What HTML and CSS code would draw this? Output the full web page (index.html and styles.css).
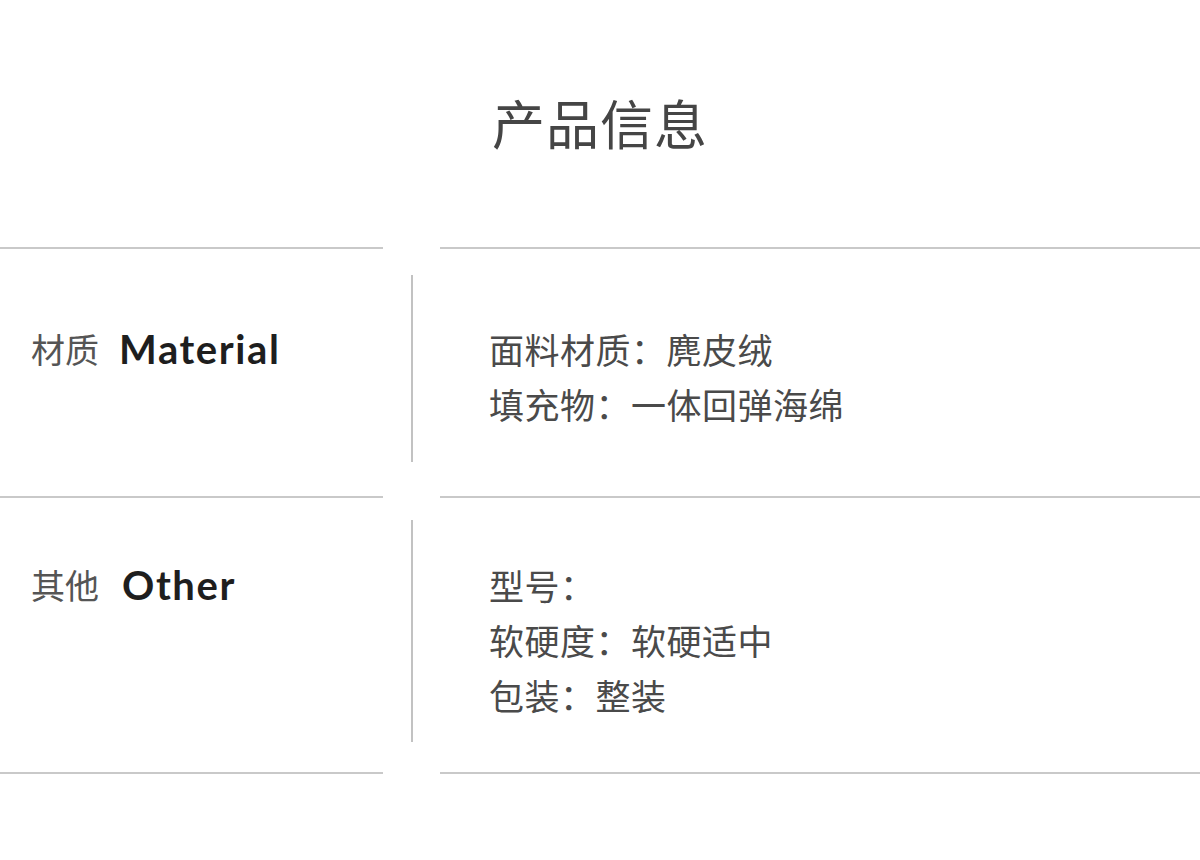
FILE: index.html
```html
<!DOCTYPE html>
<html lang="zh">
<head>
<meta charset="utf-8">
<title>产品信息</title>
<link rel="stylesheet" href="styles.css">
</head>
<body>
<div class="page">
  <h1 class="title">产品信息</h1>
  <div class="spec">
    <div class="rule"><span class="seg seg-left"></span><span class="seg seg-right"></span></div>
    <div class="row row-material">
      <div class="label"><span class="label-zh">材质</span><span class="label-en">Material</span></div>
      <div class="divider"></div>
      <div class="content">
        <p class="line">面料材质：麂皮绒</p>
        <p class="line">填充物：一体回弹海绵</p>
      </div>
    </div>
    <div class="rule"><span class="seg seg-left"></span><span class="seg seg-right"></span></div>
    <div class="row row-other">
      <div class="label"><span class="label-zh">其他</span><span class="label-en label-en-other">Other</span></div>
      <div class="divider"></div>
      <div class="content">
        <p class="line">型号：</p>
        <p class="line">软硬度：软硬适中</p>
        <p class="line">包装：整装</p>
      </div>
    </div>
    <div class="rule"><span class="seg seg-left"></span><span class="seg seg-right"></span></div>
  </div>
</div>
</body>
</html>
```

FILE: styles.css
```css
html, body {
  margin: 0;
  padding: 0;
  background: #ffffff;
}

body {
  font-family: "Noto Sans CJK SC", "Noto Sans", sans-serif;
  color: #4a4a4a;
}

.page {
  width: 1200px;
  height: 860px;
  overflow: hidden;
}

.title {
  margin: 0;
  padding-top: 87px;
  height: 70px;
  line-height: 70px;
  margin-bottom: 90px;
  text-align: center;
  font-size: 53px;
  font-weight: 400;
  color: #454545;
  letter-spacing: 1px;
}

.rule {
  display: flex;
  height: 2px;
  gap: 57px;
}

.seg {
  display: block;
  height: 2px;
  background: #c9c9c9;
}

.seg-left {
  width: 383px;
}

.seg-right {
  flex: 1;
}

.row {
  display: grid;
  grid-template-columns: 383px 57px 1fr;
}

.row-material {
  padding: 26px 0 34px;
}

.row-other {
  padding: 22px 0 30px;
}

.label {
  padding-left: 31px;
  display: flex;
  align-items: center;
  height: 55px;
  white-space: nowrap;
}

.row-material .label {
  margin-top: 46px;
}

.row-other .label {
  margin-top: 37px;
}

.label-zh {
  font-size: 34px;
  color: #555555;
  margin-right: 20px;
}

.label-en {
  font-family: "Lato", "Liberation Sans", sans-serif;
  font-weight: 700;
  font-size: 40px;
  letter-spacing: 1.6px;
  color: #1e1e1e;
}

.label-en-other {
  margin-left: 3px;
}

.divider {
  display: flex;
  justify-content: center;
}

.divider::before {
  content: "";
  display: block;
  width: 2px;
  background: #c2c2c2;
}

.content {
  padding-left: 49px;
}

.row-material .content {
  padding-top: 46px;
  padding-bottom: 31px;
}

.row-other .content {
  padding-top: 37px;
  padding-bottom: 20px;
}

.line {
  margin: 0;
  font-size: 35px;
  line-height: 55px;
  height: 55px;
  letter-spacing: 0.5px;
  color: #4a4a4a;
  white-space: nowrap;
}
```
